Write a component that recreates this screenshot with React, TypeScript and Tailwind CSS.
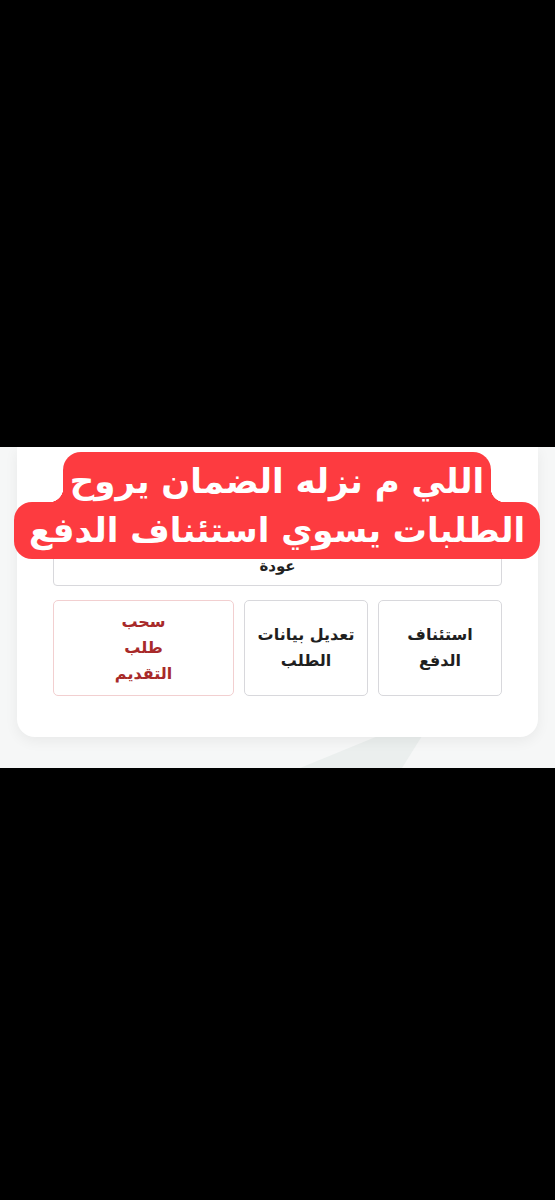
import React from 'react';

const RED = 'bg-[#fd3b40]';

function Caption() {
  return (
    <div className="absolute left-[14px] top-[5px] w-[526px] flex flex-col items-center" dir="rtl">
      <div className={`relative w-[428px] h-[50px] rounded-t-[18px] ${RED} flex items-center justify-center`}>
        <span className="absolute -left-[14px] bottom-0 w-[14px] h-[14px] bg-[radial-gradient(circle_at_0_0,transparent_14px,#fd3b40_14.5px)]" />
        <span className="absolute -right-[14px] bottom-0 w-[14px] h-[14px] bg-[radial-gradient(circle_at_100%_0,transparent_14px,#fd3b40_14.5px)]" />
        <span className="whitespace-nowrap text-white text-[34px] font-bold leading-none pt-[8px] font-['DejaVu_Sans',sans-serif]">
          اللي م نزله الضمان يروح
        </span>
      </div>
      <div className={`w-[526px] h-[57px] rounded-[18px] ${RED} flex items-center justify-center`}>
        <span className="whitespace-nowrap text-white text-[34px] font-bold leading-none pb-[2px] font-['DejaVu_Sans',sans-serif]">
          الطلبات يسوي استئناف الدفع
        </span>
      </div>
    </div>
  );
}

function ActionCard() {
  return (
    <div
      className="mx-[17px] bg-white rounded-b-[18px] shadow-[0_4px_14px_rgba(0,0,0,0.06)] px-[36px] pt-[99px] pb-[41px] font-['DejaVu_Sans',sans-serif]"
      dir="rtl"
    >
      {/* Back */}
      <div className="h-[40px] rounded-[4px] border border-[#d8d8dc] flex items-center justify-center text-[15px] font-bold text-[#222]">
        عودة
      </div>

      {/* Actions */}
      <div className="mt-[14px] grid grid-cols-[124px_124px_1fr] gap-[10px]">
        <div className="h-[96px] rounded-[5px] border border-[#d8d8dc] flex items-center justify-center text-center text-[16px] font-semibold leading-[26px] text-[#1f1f1f]">
          استئناف
          <br />
          الدفع
        </div>
        <div className="h-[96px] rounded-[5px] border border-[#d8d8dc] flex items-center justify-center text-center text-[16px] font-semibold leading-[26px] text-[#1f1f1f]">
          تعديل بيانات
          <br />
          الطلب
        </div>
        <div className="h-[96px] rounded-[5px] border border-[#f2cfd0] flex items-center justify-center text-center text-[16px] font-semibold leading-[26px] text-[#a82a2a]">
          سحب
          <br />
          طلب
          <br />
          التقديم
        </div>
      </div>
    </div>
  );
}

export default function App() {
  return (
    <div className="w-full min-h-[1200px] bg-black">
      <div className="h-[447px]" />
      <div className="relative h-[321px] overflow-hidden bg-[#f6f7f7]">
        <svg className="absolute left-0 bottom-0" width="555" height="40" viewBox="0 0 555 40">
          <polygon points="300,40 378,8 422,8 402,40" fill="#ebefee" />
        </svg>
        <div className="relative">
          <ActionCard />
        </div>
        <Caption />
      </div>
    </div>
  );
}
